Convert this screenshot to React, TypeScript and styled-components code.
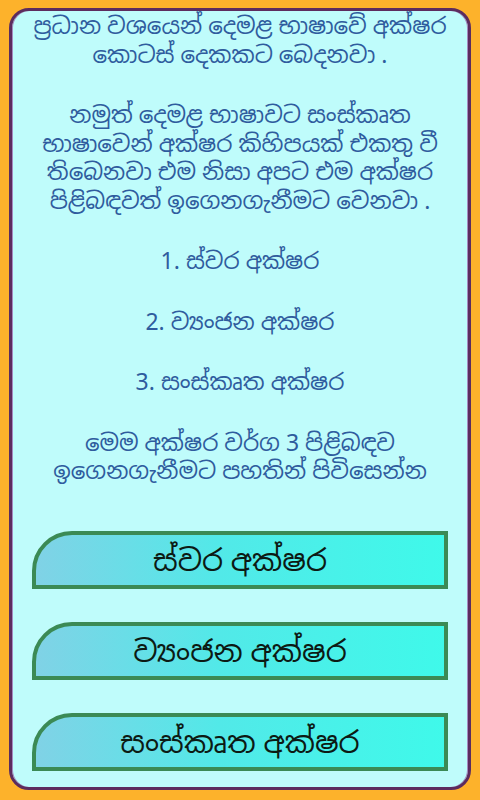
import React from 'react';
import styled, {createGlobalStyle} from 'styled-components';

const GlobalStyle = createGlobalStyle`
  html, body {
    margin: 0;
    padding: 0;
    background: #fdb22b;
  }
  body {
    font-family: "Noto Sans", "Noto Sans Sinhala", "Liberation Sans", sans-serif;
  }
`

const intro = [
    'ප්‍රධාන වශයෙන් දෙමළ භාෂාවේ අක්ෂර\nකොටස් දෙකකට බෙදනවා .',
    'නමුත් දෙමළ භාෂාවට සංස්කෘත\nභාෂාවෙන් අක්ෂර කිහිපයක් එකතු වී\nතිබෙනවා එම නිසා අපට එම අක්ෂර\nපිළිබඳවත් ඉගෙනගැනීමට වෙනවා .',
    '1. ස්වර අක්ෂර',
    '2. ව්‍යංජන අක්ෂර',
    '3. සංස්කෘත අක්ෂර',
    'මෙම අක්ෂර වර්ග 3 පිළිබඳව\nඉගෙනගැනීමට පහතින් පිවිසෙන්න',
];

const sections = ['ස්වර අක්ෂර', 'ව්‍යංජන අක්ෂර', 'සංස්කෘත අක්ෂර'];

export default function App() {
    return (
        <Page>
            <GlobalStyle/>
            <Panel>
                <Intro>
                    {intro.map((p, i) => (
                        <Paragraph key={i}>{p}</Paragraph>
                    ))}
                </Intro>
                <ButtonList>
                    {sections.map((s) => (
                        <SectionButton key={s}>{s}</SectionButton>
                    ))}
                </ButtonList>
            </Panel>
        </Page>
    );
}

const Page = styled.div`
  width: 480px;
  height: 800px;
  box-sizing: border-box;
  padding: 8px 9px 10px;
  background: #fdb22b;
  display: flex;
`

const Panel = styled.div`
  flex: 1;
  display: flex;
  flex-direction: column;
  background: #bffcfb;
  border: 3px solid #5c2c5e;
  box-shadow: inset 1px 0 0 #a58ac0, inset -1px 0 0 #a58ac0;
  border-radius: 20px;
  overflow: hidden;
`

const Intro = styled.div`
  display: flex;
  flex-direction: column;
  gap: 32px;
  padding: 0 10px;
  color: #2f5c9e;
  font-size: 23px;
  line-height: 28.5px;
  text-align: center;
`

const Paragraph = styled.p`
  margin: 0;
  white-space: pre-line;
`

const ButtonList = styled.div`
  display: flex;
  flex-direction: column;
  gap: 33px;
  padding: 46px 20px 0 20px;
`

const SectionButton = styled.button`
  height: 58px;
  box-sizing: border-box;
  border: 4px solid #3b8a55;
  border-radius: 40px 0 0 0;
  background: linear-gradient(90deg, #80d2e6 0%, #52e9e8 45%, #3ff9ea 100%);
  color: #0c1a14;
  font-family: inherit;
  font-size: 30px;
  padding: 0;
  cursor: pointer;
`
